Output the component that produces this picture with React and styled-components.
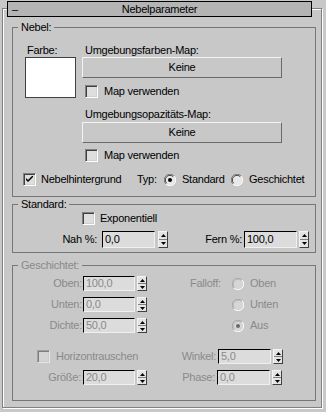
import styled, { createGlobalStyle } from 'styled-components';

const GlobalStyle = createGlobalStyle`
  body {
    margin: 0;
    background: #c8c8c8;
  }
`;

const Page = styled.div`
  width: 326px;
  height: 412px;
  box-sizing: border-box;
  padding: 8px 4px 0 2px;
  background: #c8c8c8;
  font-family: "Liberation Sans", Arial, sans-serif;
  font-size: 11px;
  letter-spacing: -0.25px;
  line-height: 13px;
  color: #000;
  overflow: hidden;
`;

const Frame = styled.div`
  border: 1px solid #808080;
  box-shadow: inset 1px 1px 0 #fff, 1px 1px 0 #fff;
  padding: 0 5px 6px 9px;
`;

const TitleBar = styled.div`
  display: grid;
  grid-template-columns: 20px 1fr 20px;
  align-items: center;
  height: 16px;
  box-sizing: border-box;
  margin: -8px 4px 0 -5px;
  border: 1px solid #000;
  background: #b4b4b4;
`;

const Minus = styled.span`
  padding-left: 4px;
  line-height: 12px;
`;

const TitleText = styled.span`
  text-align: center;
  line-height: 14px;
`;

const Group = styled.fieldset`
  margin: ${(p) => p.$top}px 0 0 0;
  padding: 0;
  border: 1px solid #777;
  min-width: 0;
`;

const Legend = styled.legend`
  margin-left: 5px;
  padding: 0 3px;
  line-height: 13px;
  color: ${(p) => (p.$disabled ? '#8a8a8a' : '#000')};
`;

const Body = styled.div`
  padding: ${(p) => p.$pad};
  color: ${(p) => (p.$disabled ? '#8a8a8a' : '#000')};
`;

const TopGrid = styled.div`
  display: grid;
  grid-template-columns: 51px 200px;
  column-gap: 6px;
  padding-left: 1px;
`;

const Column = styled.div`
  display: flex;
  flex-direction: column;
`;

const Caption = styled.div`
  height: 13px;
  padding-left: ${(p) => p.$indent || 0}px;
  margin-top: ${(p) => p.$top || 0}px;
  white-space: nowrap;
`;

const Swatch = styled.div`
  width: 51px;
  height: 41px;
  box-sizing: border-box;
  background: #fff;
  border: 1px solid #404040;
`;

const MapButton = styled.div`
  height: 21px;
  box-sizing: border-box;
  margin-top: ${(p) => p.$top || 0}px;
  display: flex;
  align-items: center;
  justify-content: center;
  background: #c8c8c8;
  border: 1px solid;
  border-color: #f4f4f4 #6a6a6a #6a6a6a #f4f4f4;
`;

const CheckRow = styled.div`
  display: flex;
  align-items: center;
  height: 13px;
  margin-top: ${(p) => p.$top || 0}px;
  padding-left: ${(p) => p.$indent || 0}px;
  gap: ${(p) => p.$gap || 5}px;
  white-space: nowrap;
`;

const Box = styled.span`
  width: 13px;
  height: 13px;
  flex: none;
  box-sizing: border-box;
  display: flex;
  align-items: center;
  justify-content: center;
  background: #dedede;
  border: 1px solid;
  border-color: #808080 #fff #fff #808080;
  box-shadow: inset 1px 1px 0 #404040, inset -1px -1px 0 #d0d0d0;
  opacity: ${(p) => (p.$disabled ? 0.55 : 1)};
`;

const OptionRow = styled.div`
  display: flex;
  align-items: center;
  height: 13px;
  margin-top: 11px;
  margin-left: -1px;
  white-space: nowrap;
`;

const Slot = styled.div`
  display: flex;
  align-items: center;
  gap: ${(p) => p.$gap || 6}px;
  width: ${(p) => (p.$w ? `${p.$w}px` : 'auto')};
  flex: none;
`;

const FieldRow = styled.div`
  display: flex;
  align-items: center;
  height: ${(p) => p.$h}px;
  margin-top: ${(p) => p.$top || 0}px;
`;

const FieldLabel = styled.span`
  width: ${(p) => p.$w}px;
  flex: none;
  box-sizing: border-box;
  text-align: right;
  padding-right: ${(p) => p.$pr ?? 2}px;
  white-space: nowrap;
`;

const Input = styled.div`
  width: ${(p) => p.$w}px;
  height: ${(p) => p.$h}px;
  flex: none;
  box-sizing: border-box;
  padding-left: 2px;
  display: flex;
  align-items: center;
  background: #dcdcdc;
  border: 1px solid;
  border-color: #000 #f0f0f0 #f0f0f0 #000;
  color: ${(p) => (p.$disabled ? '#8a8a8a' : '#000')};
`;

const SpinBox = styled.div`
  width: 10px;
  height: ${(p) => p.$h}px;
  margin-left: ${(p) => p.$gap ?? 3}px;
  flex: none;
  box-sizing: border-box;
  display: flex;
  flex-direction: column;
  border: 1px solid;
  border-color: #f4f4f4 #404040 #404040 #f4f4f4;
  background: #e4e4e4;
`;

const SpinHalf = styled.span`
  flex: 1;
  display: flex;
  align-items: center;
  justify-content: center;
  & + & {
    border-top: 1px solid #808080;
  }
`;

const Split = styled.div`
  display: flex;
`;

const Stack = styled.div`
  display: flex;
  flex-direction: column;
  gap: 6px;
  width: ${(p) => (p.$w ? `${p.$w}px` : 'auto')};
  margin-left: ${(p) => p.$ml || 0}px;
`;

const FalloffRow = styled.div`
  display: grid;
  grid-template-columns: 36px 12px auto;
  column-gap: 6px;
  align-items: center;
  height: 15px;
`;

function Check({ checked, disabled }) {
  return (
    <Box $disabled={disabled}>
      {checked && (
        <svg width="7" height="7" viewBox="0 0 7 7">
          <path d="M0 2 L0 4 L2 6 L7 1 L7 -1 L2 4 Z" fill="#000" />
        </svg>
      )}
    </Box>
  );
}

function Radio({ checked, disabled }) {
  const dark = disabled ? '#a8a8a8' : '#7a7a7a';
  const dot = disabled ? '#6a6a6a' : '#000';
  return (
    <svg width="12" height="12" viewBox="0 0 12 12">
      <circle cx="6" cy="6" r="5.5" fill={disabled ? '#d6d6d6' : '#e8e8e8'} />
      <path d="M1.9 10.1 A5.5 5.5 0 0 1 10.1 1.9" fill="none" stroke={dark} strokeWidth="1" />
      <path d="M10.1 1.9 A5.5 5.5 0 0 1 1.9 10.1" fill="none" stroke="#fafafa" strokeWidth="1" />
      <path d="M2.7 9.3 A4.5 4.5 0 0 1 9.3 2.7" fill="none" stroke={disabled ? '#b8b8b8' : '#404040'} strokeWidth="1" />
      {checked && <circle cx="6" cy="6" r="2" fill={dot} />}
    </svg>
  );
}

function Spinner({ h, gap }) {
  return (
    <SpinBox $h={h} $gap={gap}>
      <SpinHalf>
        <svg width="5" height="3" viewBox="0 0 5 3">
          <path d="M2.5 0 L5 3 L0 3 Z" fill="#000" />
        </svg>
      </SpinHalf>
      <SpinHalf>
        <svg width="5" height="3" viewBox="0 0 5 3">
          <path d="M0 0 L5 0 L2.5 3 Z" fill="#000" />
        </svg>
      </SpinHalf>
    </SpinBox>
  );
}

function Field({ label, value, lw, iw, h, gap, pr, disabled }) {
  return (
    <>
      <FieldLabel $w={lw} $pr={pr}>{label}</FieldLabel>
      <Input $w={iw} $h={h} $disabled={disabled}>{value}</Input>
      <Spinner h={h} gap={gap} />
    </>
  );
}

export default function App() {
  return (
    <Page>
      <GlobalStyle />
      <Frame>
        <TitleBar>
          <Minus>–</Minus>
          <TitleText>Nebelparameter</TitleText>
          <span />
        </TitleBar>

        <Group $top={4}>
          <Legend>Nebel:</Legend>
          <Body $pad="10px 0 10px 11px">
            <TopGrid>
              <Column>
                <Caption $indent={2}>Farbe:</Caption>
                <Swatch />
              </Column>
              <Column>
                <Caption $indent={3}>Umgebungsfarben-Map:</Caption>
                <MapButton>Keine</MapButton>
                <CheckRow $top={7} $indent={3} $gap={6}>
                  <Check />
                  Map verwenden
                </CheckRow>
                <Caption $indent={3} $top={10}>Umgebungsopazitäts-Map:</Caption>
                <MapButton $top={1}>Keine</MapButton>
                <CheckRow $top={6} $indent={3} $gap={6}>
                  <Check />
                  Map verwenden
                </CheckRow>
              </Column>
            </TopGrid>
            <OptionRow>
              <Slot $w={114} $gap={5}>
                <Check checked />
                Nebelhintergrund
              </Slot>
              <Slot $w={27}>Typ:</Slot>
              <Slot $w={67}>
                <Radio checked />
                Standard
              </Slot>
              <Slot>
                <Radio />
                Geschichtet
              </Slot>
            </OptionRow>
          </Body>
        </Group>

        <Group $top={1}>
          <Legend>Standard:</Legend>
          <Body $pad="1px 0 4px 0">
            <CheckRow $indent={69}>
              <Check />
              Exponentiell
            </CheckRow>
            <FieldRow $h={17} $top={6}>
              <Field label="Nah %:" value="0,0" lw={89} iw={53} h={17} pr={5} />
              <Field label="Fern %:" value="100,0" lw={76} iw={53} h={17} gap={2} pr={2} />
            </FieldRow>
          </Body>
        </Group>

        <Group $top={6}>
          <Legend $disabled>Geschichtet:</Legend>
          <Body $pad="4px 0 15px 0" $disabled>
            <Split>
              <Stack $w={135}>
                <FieldRow $h={15}>
                  <Field label="Oben:" value="100,0" lw={70} iw={52} h={15} gap={2} pr={1} disabled />
                </FieldRow>
                <FieldRow $h={15}>
                  <Field label="Unten:" value="0,0" lw={70} iw={52} h={15} gap={2} pr={1} disabled />
                </FieldRow>
                <FieldRow $h={15}>
                  <Field label="Dichte:" value="50,0" lw={70} iw={52} h={15} gap={2} pr={1} disabled />
                </FieldRow>
              </Stack>
              <Stack $ml={42}>
                <FalloffRow>
                  <span>Falloff:</span>
                  <Radio disabled />
                  <span>Oben</span>
                </FalloffRow>
                <FalloffRow>
                  <span />
                  <Radio disabled />
                  <span>Unten</span>
                </FalloffRow>
                <FalloffRow>
                  <span />
                  <Radio checked disabled />
                  <span>Aus</span>
                </FalloffRow>
              </Stack>
            </Split>
            <FieldRow $h={15} $top={16}>
              <Stack $w={135}>
                <CheckRow $indent={24} $gap={6}>
                  <Check disabled />
                  Horizontrauschen
                </CheckRow>
              </Stack>
              <Field label="Winkel:" value="5,0" lw={70} iw={53} h={15} gap={2} pr={2} disabled />
            </FieldRow>
            <FieldRow $h={15} $top={6}>
              <Field label="Größe:" value="20,0" lw={70} iw={52} h={15} gap={2} pr={2} disabled />
              <Field label="Phase:" value="0,0" lw={70} iw={53} h={15} gap={2} pr={2} disabled />
            </FieldRow>
          </Body>
        </Group>
      </Frame>
    </Page>
  );
}
